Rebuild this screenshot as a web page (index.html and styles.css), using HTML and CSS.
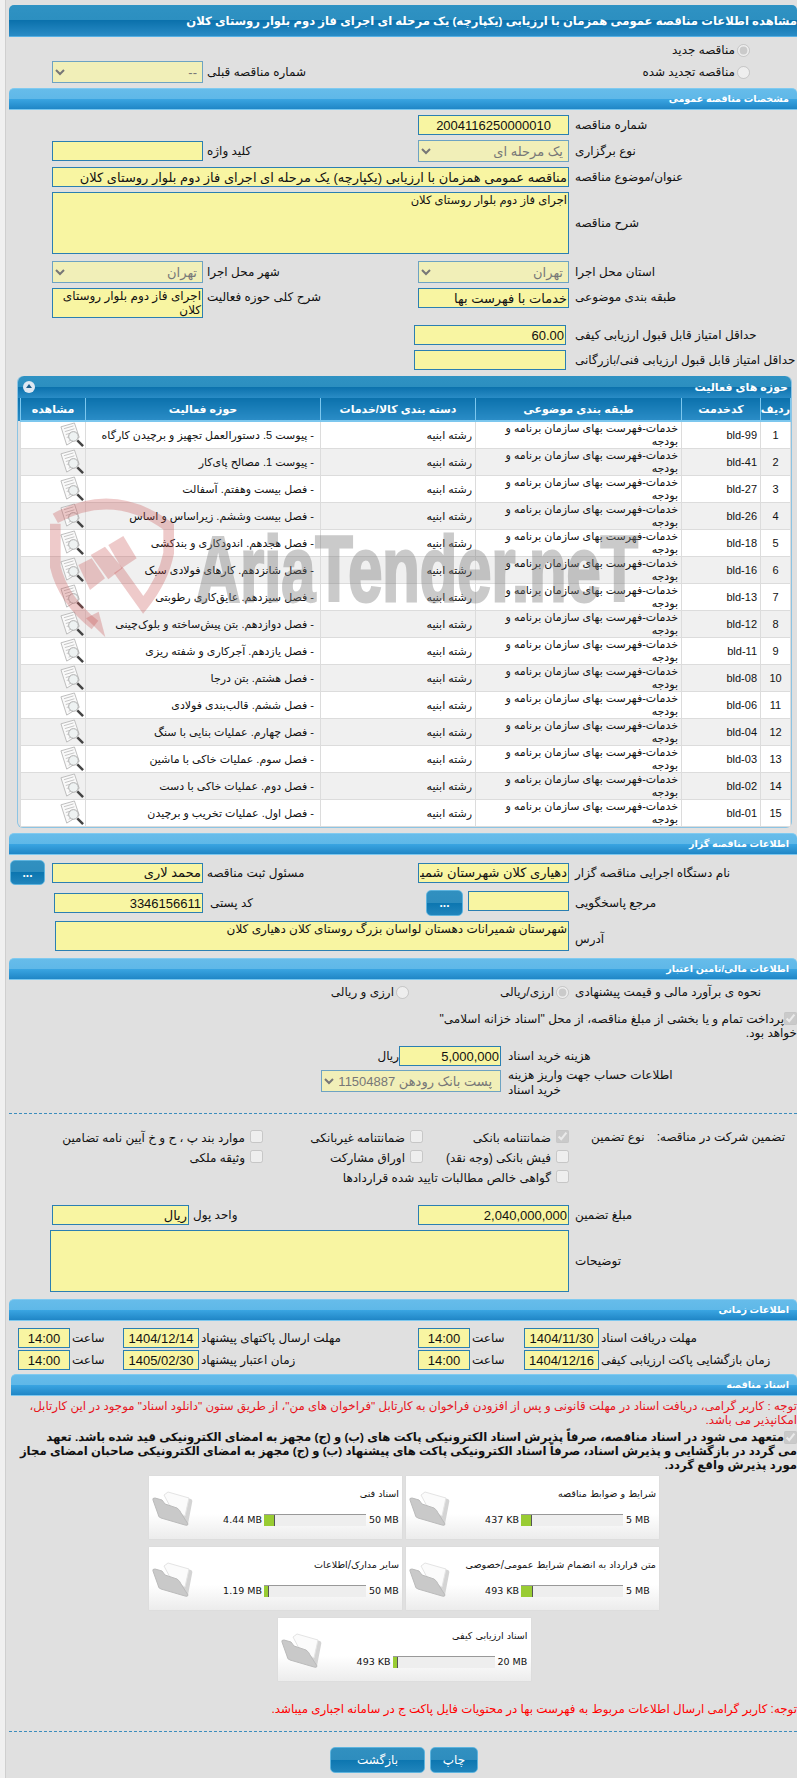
FILE: index.html
```html
<!DOCTYPE html>
<html lang="fa" dir="rtl">
<head>
  <meta charset="UTF-8" />
  <title>مشاهده اطلاعات مناقصه</title>
  <link rel="stylesheet" href="styles.css">
</head>
<body>
  <svg class="defs" width="0" height="0">
    <symbol id="doc-view" viewBox="0 0 26 27">
      <path d="M1 5 L15 1 L20 16 L7 24 Z" fill="#fafafa" stroke="#bbb" />
      <path d="M4 7 L14 4 M5 10 L15 7 M6 13 L11 11.5 M7 16 L9 15.5 M9 20 L11 19" stroke="#c4c4c4" fill="none" />
      <circle cx="14" cy="15" r="5" fill="#eef2f2" stroke="#aaa" />
      <path d="M18 19 L24 25" stroke="#444" stroke-width="2.6" />
    </symbol>
    <symbol id="folder" viewBox="0 0 41 36">
      <path d="M14 3 L39 9 Q41 10 40 13 L36 34 L28 30 Z" fill="#d4d4d4" />
      <path d="M12 5 L16 2 L37 8 L33 26 L20 20 Z" fill="#fbfbfb" stroke="#e4e4e4" />
      <path d="M1 10 Q0 8 3 8 L10 10 L13 14 L25 18 Q28 20 29 23 L36 34 Q36 36 33 35 L9 28 Q6 27 6 24 Z" fill="#c9c9c9" stroke="#bbb" />
    </symbol>
  </svg>

  <div class="page">
    <div class="title-bar">مشاهده اطلاعات مناقصه عمومی همزمان با ارزیابی (یکپارچه) یک مرحله ای اجرای فاز دوم بلوار روستای کلان</div>

    <div class="radio-line"><input type="radio" name="kind" checked disabled><span>مناقصه جدید</span></div>
    <div class="row gap-4">
      <div class="radio-line flush"><input type="radio" name="kind" disabled><span>مناقصه تجدید شده</span></div>
      <div class="cell"></div>
      <label class="lbl2">شماره مناقصه قبلی</label>
      <select class="fld sel" disabled><option>--</option></select>
    </div>

    <div class="section gap-5">مشخصات مناقصه عمومی</div>
    <div class="row gap-5">
      <label class="lbl">شماره مناقصه</label>
      <input class="fld center" type="text" value="2004116250000010" readonly>
    </div>
    <div class="row gap-5">
      <label class="lbl">نوع برگزاری</label>
      <select class="fld sel" disabled><option>یک مرحله ای</option></select>
      <label class="lbl2">کلید واژه</label>
      <input class="fld" type="text" readonly>
    </div>
    <div class="row gap-5">
      <label class="lbl">عنوان/موضوع مناقصه</label>
      <input class="fld span3" type="text" value="مناقصه عمومی همزمان با ارزیابی (یکپارچه) یک مرحله ای اجرای فاز دوم بلوار روستای کلان" readonly>
    </div>
    <div class="row gap-5">
      <label class="lbl">شرح مناقصه</label>
      <textarea class="fld span3 tall" readonly>اجرای فاز دوم بلوار روستای کلان</textarea>
    </div>
    <div class="row gap-7">
      <label class="lbl">استان محل اجرا</label>
      <select class="fld sel" disabled><option>تهران</option></select>
      <label class="lbl2">شهر محل اجرا</label>
      <select class="fld sel" disabled><option>تهران</option></select>
    </div>
    <div class="row gap-5 top">
      <label class="lbl">طبقه بندی موضوعی</label>
      <input class="fld" type="text" value="خدمات با فهرست بها" readonly>
      <label class="lbl2">شرح کلی حوزه فعالیت</label>
      <textarea class="fld short" readonly>اجرای فاز دوم بلوار روستای کلان</textarea>
    </div>
    <div class="row score gap-7">
      <label class="lbl">حداقل امتیاز قابل قبول ارزیابی کیفی</label>
      <input class="fld" type="text" value="60.00" readonly>
    </div>
    <div class="row score gap-5">
      <label class="lbl">حداقل امتیاز قابل قبول ارزیابی فنی/بازرگانی</label>
      <input class="fld" type="text" readonly>
    </div>

    <div class="panel">
      <div class="panel-head">
        <span>حوزه های فعالیت</span>
        <span class="toggle"></span>
      </div>
      <table class="grid">
        <thead>
          <tr><th class="c1">ردیف</th><th class="c2">کدخدمت</th><th class="c3">طبقه بندی موضوعی</th><th class="c4">دسته بندی کالا/خدمات</th><th class="c5">حوزه فعالیت</th><th class="c6">مشاهده</th></tr>
        </thead>
        <tbody>
          <tr><td class="mid">1</td><td class="code">bld-99</td><td>خدمات-فهرست بهای سازمان برنامه و بودجه</td><td>رشته ابنیه</td><td class="area">- پیوست 5. دستورالعمل تجهیز و برچیدن کارگاه</td><td class="view"><svg><use href="#doc-view"/></svg></td></tr>
          <tr><td class="mid">2</td><td class="code">bld-41</td><td>خدمات-فهرست بهای سازمان برنامه و بودجه</td><td>رشته ابنیه</td><td class="area">- پیوست 1. مصالح پای‌کار</td><td class="view"><svg><use href="#doc-view"/></svg></td></tr>
          <tr><td class="mid">3</td><td class="code">bld-27</td><td>خدمات-فهرست بهای سازمان برنامه و بودجه</td><td>رشته ابنیه</td><td class="area">- فصل بیست وهفتم. آسفالت</td><td class="view"><svg><use href="#doc-view"/></svg></td></tr>
          <tr><td class="mid">4</td><td class="code">bld-26</td><td>خدمات-فهرست بهای سازمان برنامه و بودجه</td><td>رشته ابنیه</td><td class="area">- فصل بیست وششم. زیراساس و اساس</td><td class="view"><svg><use href="#doc-view"/></svg></td></tr>
          <tr><td class="mid">5</td><td class="code">bld-18</td><td>خدمات-فهرست بهای سازمان برنامه و بودجه</td><td>رشته ابنیه</td><td class="area">- فصل هجدهم. اندودکاری و بندکشی</td><td class="view"><svg><use href="#doc-view"/></svg></td></tr>
          <tr><td class="mid">6</td><td class="code">bld-16</td><td>خدمات-فهرست بهای سازمان برنامه و بودجه</td><td>رشته ابنیه</td><td class="area">- فصل شانزدهم. کارهای فولادی سبک</td><td class="view"><svg><use href="#doc-view"/></svg></td></tr>
          <tr><td class="mid">7</td><td class="code">bld-13</td><td>خدمات-فهرست بهای سازمان برنامه و بودجه</td><td>رشته ابنیه</td><td class="area">- فصل سیزدهم. عایق‌کاری رطوبتی</td><td class="view"><svg><use href="#doc-view"/></svg></td></tr>
          <tr><td class="mid">8</td><td class="code">bld-12</td><td>خدمات-فهرست بهای سازمان برنامه و بودجه</td><td>رشته ابنیه</td><td class="area">- فصل دوازدهم. بتن پیش‌ساخته و بلوک‌چینی</td><td class="view"><svg><use href="#doc-view"/></svg></td></tr>
          <tr><td class="mid">9</td><td class="code">bld-11</td><td>خدمات-فهرست بهای سازمان برنامه و بودجه</td><td>رشته ابنیه</td><td class="area">- فصل یازدهم. آجرکاری و شفته ریزی</td><td class="view"><svg><use href="#doc-view"/></svg></td></tr>
          <tr><td class="mid">10</td><td class="code">bld-08</td><td>خدمات-فهرست بهای سازمان برنامه و بودجه</td><td>رشته ابنیه</td><td class="area">- فصل هشتم. بتن درجا</td><td class="view"><svg><use href="#doc-view"/></svg></td></tr>
          <tr><td class="mid">11</td><td class="code">bld-06</td><td>خدمات-فهرست بهای سازمان برنامه و بودجه</td><td>رشته ابنیه</td><td class="area">- فصل ششم. قالب‌بندی فولادی</td><td class="view"><svg><use href="#doc-view"/></svg></td></tr>
          <tr><td class="mid">12</td><td class="code">bld-04</td><td>خدمات-فهرست بهای سازمان برنامه و بودجه</td><td>رشته ابنیه</td><td class="area">- فصل چهارم. عملیات بنایی با سنگ</td><td class="view"><svg><use href="#doc-view"/></svg></td></tr>
          <tr><td class="mid">13</td><td class="code">bld-03</td><td>خدمات-فهرست بهای سازمان برنامه و بودجه</td><td>رشته ابنیه</td><td class="area">- فصل سوم. عملیات خاکی با ماشین</td><td class="view"><svg><use href="#doc-view"/></svg></td></tr>
          <tr><td class="mid">14</td><td class="code">bld-02</td><td>خدمات-فهرست بهای سازمان برنامه و بودجه</td><td>رشته ابنیه</td><td class="area">- فصل دوم. عملیات خاکی با دست</td><td class="view"><svg><use href="#doc-view"/></svg></td></tr>
          <tr><td class="mid">15</td><td class="code">bld-01</td><td>خدمات-فهرست بهای سازمان برنامه و بودجه</td><td>رشته ابنیه</td><td class="area">- فصل اول. عملیات تخریب و برچیدن</td><td class="view"><svg><use href="#doc-view"/></svg></td></tr>
        </tbody>
      </table>
    </div>

    <div class="section gap-5">اطلاعات مناقصه گزار</div>
    <div class="row with-btn gap-5">
      <label class="lbl">نام دستگاه اجرایی مناقصه گزار</label>
      <input class="fld" type="text" value="دهیاری کلان شهرستان شمیرانات" readonly>
      <label class="lbl2">مسئول ثبت مناقصه</label>
      <input class="fld" type="text" value="محمد لاری" readonly>
      <button class="btn dots" type="button">...</button>
    </div>
    <div class="row gap-5 h26">
      <label class="lbl">مرجع پاسخگویی</label>
      <div class="ref-wrap">
        <input class="fld ref" type="text" readonly>
        <button class="btn dots2" type="button">...</button>
      </div>
      <label class="lbl2 postal-lbl">کد پستی</label>
      <input class="fld postal" type="text" value="3346156611" readonly>
    </div>
    <div class="row gap-5">
      <label class="lbl addr-lbl">آدرس</label>
      <textarea class="fld span3 addr" readonly>شهرستان شمیرانات دهستان لواسان بزرگ روستای کلان دهیاری کلان</textarea>
    </div>

    <div class="section gap-7">اطلاعات مالی/تامین اعتبار</div>
    <div class="money-type">
      <label class="lbl">نحوه ی برآورد مالی و قیمت پیشنهادی</label>
      <div class="opt w160"><input type="radio" name="cur" checked disabled><span>ارزی/ریالی</span></div>
      <div class="opt"><input type="radio" name="cur" disabled><span>ارزی و ریالی</span></div>
    </div>
    <p class="check-note"><input type="checkbox" checked disabled><span>پرداخت تمام و یا بخشی از مبلغ مناقصه، از محل "اسناد خزانه اسلامی"</span><br>خواهد بود.</p>
    <div class="row doc-cost gap-6">
      <label class="lbl">هزینه خرید اسناد</label>
      <input class="fld" type="text" value="5,000,000" readonly>
      <span class="unit">ریال</span>
    </div>
    <div class="row account gap-2">
      <label class="lbl">اطلاعات حساب جهت واریز هزینه<br>خرید اسناد</label>
      <select class="fld sel" disabled><option>پست بانک رودهن 0211504887</option></select>
    </div>

    <div class="dash gap-15"></div>

    <div class="guarantee">
      <div class="g-title"><span>تضمین شرکت در مناقصه:</span><span>نوع تضمین</span></div>
      <div class="g-opts">
        <div class="opt"><input type="checkbox" checked disabled><span>ضمانتنامه بانکی</span></div>
        <div class="opt"><input type="checkbox" disabled><span>ضمانتنامه غیربانکی</span></div>
        <div class="opt"><input type="checkbox" disabled><span>موارد بند پ ، ح و خ آیین نامه تضامین</span></div>
        <div class="opt"><input type="checkbox" disabled><span>فیش بانکی (وجه نقد)</span></div>
        <div class="opt"><input type="checkbox" disabled><span>اوراق مشارکت</span></div>
        <div class="opt"><input type="checkbox" disabled><span>وثیقه ملکی</span></div>
        <div class="opt wide"><input type="checkbox" disabled><span>گواهی خالص مطالبات تایید شده قراردادها</span></div>
      </div>
    </div>
    <div class="row amount gap-19">
      <label class="lbl">مبلغ تضمین</label>
      <input class="fld" type="text" value="2,040,000,000" readonly>
      <label class="lbl2">واحد پول</label>
      <input class="fld" type="text" value="ریال" readonly>
    </div>
    <div class="row gap-5">
      <label class="lbl">توضیحات</label>
      <textarea class="fld span3 notes" readonly></textarea>
    </div>

    <div class="section gap-7">اطلاعات زمانی</div>
    <div class="times gap-7">
      <label class="lbl">مهلت دریافت اسناد</label>
      <input class="fld" type="text" value="1404/11/30" readonly>
      <label>ساعت</label>
      <input class="fld" type="text" value="14:00" readonly>
      <label>مهلت ارسال پاکتهای پیشنهاد</label>
      <input class="fld" type="text" value="1404/12/14" readonly>
      <label>ساعت</label>
      <input class="fld" type="text" value="14:00" readonly>
    </div>
    <div class="times gap-2">
      <label class="lbl">زمان بازگشایی پاکت ارزیابی کیفی</label>
      <input class="fld" type="text" value="1404/12/16" readonly>
      <label>ساعت</label>
      <input class="fld" type="text" value="14:00" readonly>
      <label>زمان اعتبار پیشنهاد</label>
      <input class="fld" type="text" value="1405/02/30" readonly>
      <label>ساعت</label>
      <input class="fld" type="text" value="14:00" readonly>
    </div>

    <div class="section docs gap-4">اسناد مناقصه</div>
    <p class="red-note">توجه : کاربر گرامی، دریافت اسناد در مهلت قانونی و پس از افزودن فراخوان به کارتابل "فراخوان های من"، از طریق ستون "دانلود اسناد" موجود در این کارتابل،<br>امکانپذیر می باشد.</p>
    <p class="bold-note"><input type="checkbox" checked disabled><span>متعهد می شود در اسناد مناقصه، صرفاً پذیرش اسناد الکترونیکی پاکت های (ب) و (ج) مجهز به امضای الکترونیکی قید شده باشد. تعهد</span><br>می گردد در بازگشایی و پذیرش اسناد، صرفاً اسناد الکترونیکی پاکت های پیشنهاد (ب) و (ج) مجهز به امضای الکترونیکی صاحبان امضای مجاز<br>مورد پذیرش واقع گردد.</p>

    <div class="cards">
      <div class="card">
        <svg class="folder"><use href="#folder"/></svg>
        <div class="card-body">
          <div class="card-title">شرایط و ضوابط مناقصه</div>
          <div class="meter"><span>437 KB</span><div class="bar"><div class="fill" style="width: 11%"></div></div><span class="max">5 MB</span></div>
        </div>
      </div>
      <div class="card">
        <svg class="folder"><use href="#folder"/></svg>
        <div class="card-body">
          <div class="card-title">اسناد فنی</div>
          <div class="meter"><span>4.44 MB</span><div class="bar"><div class="fill" style="width: 11%"></div></div><span class="max">50 MB</span></div>
        </div>
      </div>
      <div class="card">
        <svg class="folder"><use href="#folder"/></svg>
        <div class="card-body">
          <div class="card-title">متن قرارداد به انضمام شرایط عمومی/خصوصی</div>
          <div class="meter"><span>493 KB</span><div class="bar"><div class="fill" style="width: 11.5%"></div></div><span class="max">5 MB</span></div>
        </div>
      </div>
      <div class="card">
        <svg class="folder"><use href="#folder"/></svg>
        <div class="card-body">
          <div class="card-title">سایر مدارک/اطلاعات</div>
          <div class="meter"><span>1.19 MB</span><div class="bar"><div class="fill" style="width: 5%"></div></div><span class="max">50 MB</span></div>
        </div>
      </div>
      <div class="card">
        <svg class="folder"><use href="#folder"/></svg>
        <div class="card-body">
          <div class="card-title">اسناد ارزیابی کیفی</div>
          <div class="meter"><span>493 KB</span><div class="bar"><div class="fill" style="width: 5%"></div></div><span class="max">20 MB</span></div>
        </div>
      </div>
    </div>

    <p class="red-note last">توجه: کاربر گرامی ارسال اطلاعات مربوط به فهرست بها در محتویات فایل پاکت ج در سامانه اجباری میباشد.</p>
    <div class="dash gap-15"></div>
    <div class="actions">
      <button class="btn print" type="button">چاپ</button>
      <button class="btn back" type="button">بازگشت</button>
    </div>
  </div>

  <svg class="watermark" viewBox="40 490 610 160">
    <g transform="translate(40 490) scale(.3333)">
      <g fill="none" stroke="#c85050" stroke-opacity=".3" stroke-width="32">
        <path d="M46 85 Q220 -12 386 110 L386 190 Q370 270 310 345 L235 240" />
        <path d="M46 101 L46 230 Q70 330 165 405" />
      </g>
      <g fill="#c85050" fill-opacity=".3">
        <path d="M138 385 L176 365 L196 442 Z" />
        <path d="M115 225 L155 205 L195 265 L150 300 Z" />
        <path d="M152 195 L195 170 L248 235 L205 268 Z" />
        <path d="M205 165 L250 138 L290 205 L245 235 Z" />
      </g>
    </g>
    <text class="wm-text" x="196" y="601" textLength="442" lengthAdjust="spacingAndGlyphs">AriaTender.neT</text>
  </svg>
</body>
</html>
```

FILE: styles.css
```css
html, body {
  margin: 0;
  padding: 0;
}

body {
  position: relative;
  background: #f0f0f0;
  font-family: "Liberation Sans", "DejaVu Sans", sans-serif;
  font-size: 12px;
  line-height: 14px;
  color: #111;
  overflow: hidden;
}

.defs {
  position: absolute;
}

.page {
  height: 1778px;
  box-sizing: border-box;
  margin-left: 5px;
  padding: 5px 0 0 3px;
  border-left: 1px solid #cfcfcf;
  background: #e0e0e0;
  overflow: hidden;
}

.gap-2 { margin-top: 2px; }
.gap-4 { margin-top: 4px; }
.gap-5 { margin-top: 5px; }
.gap-6 { margin-top: 6px; }
.gap-7 { margin-top: 7px; }
.gap-15 { margin-top: 15px; }
.gap-19 { margin-top: 19px; }

.title-bar {
  height: 32px;
  box-sizing: border-box;
  border-radius: 5px 5px 0 0;
  border-bottom: 1px solid #56b0e4;
  background: linear-gradient(#2f92c3 0, #2c8fc0 48%, #0b71ac 50%, #2a8cc6 100%);
  color: #fff;
  font-size: 11.6px;
  font-weight: bold;
  line-height: 31px;
  white-space: nowrap;
}

.section {
  height: 22px;
  box-sizing: border-box;
  padding-right: 8px;
  border-radius: 5px 5px 0 0;
  border-top: 1px solid #7fcaf0;
  border-bottom: 1px solid #7cc7ee;
  background: linear-gradient(#66bcea 0, #5fb8e8 48%, #3aa5e2 50%, #2086c6 100%);
  color: #fff;
  font-size: 9.6px;
  font-weight: bold;
  line-height: 20px;
}

.section.docs {
  margin-left: 2px;
}

.row {
  display: grid;
  grid-template-columns: 228px 151px 215px 151px;
  align-items: center;
}

.row.top {
  align-items: start;
}

.row.top label {
  margin-top: 2px;
}

.row.score {
  grid-template-columns: 231px 152px;
}

.row.score .lbl {
  padding-left: 9px;
}

.row.with-btn {
  grid-template-columns: 228px 151px 215px 151px 43px;
  height: 25px;
}

.row.doc-cost {
  grid-template-columns: 296px 102px auto;
}

.row.account {
  grid-template-columns: 296px 180px;
  align-items: start;
}

.row.account .sel {
  margin-top: 2px;
  padding-right: 4px;
}

.row.amount {
  grid-template-columns: 228px 151px 229px 137px;
}

.h26 {
  height: 26px;
}

.lbl {
  padding-left: 6px;
  text-align: left;
  white-space: nowrap;
}

.lbl2 {
  padding-left: 4px;
  text-align: left;
  white-space: nowrap;
}

.postal-lbl {
  padding-left: 7px;
}

.addr-lbl {
  align-self: end;
  margin-bottom: 5px;
}

.fld {
  display: block;
  width: 100%;
  height: 20px;
  box-sizing: border-box;
  margin: 0;
  padding: 0 1px;
  border: 1px solid #2b7fb2;
  border-radius: 0;
  background: #f8f5a2;
  font-family: "Liberation Sans", "DejaVu Sans", sans-serif;
  font-size: 13px;
  color: #111;
  outline: none;
  resize: none;
}

.center {
  text-align: center;
}

.sel {
  height: 22px;
  border-color: #6ea3c2;
  background-color: #f1efb8;
  color: #777;
  opacity: 1;
}

.span3 {
  grid-column: span 3;
}

.tall {
  height: 62px;
  font-size: 11.5px;
}

.short {
  height: 30px;
  font-size: 12px;
  line-height: 14px;
}

.addr {
  width: 514px;
  height: 30px;
  font-size: 12px;
}

.notes {
  width: 519px;
  height: 62px;
}

.ref-wrap {
  display: flex;
  gap: 5px;
  align-items: flex-start;
}

.ref {
  width: 101px;
  margin-top: 1px;
}

.postal {
  width: 149px;
  margin-top: 3px;
  align-self: start;
}

.btn {
  padding: 0;
  border: 1px solid #5fb4de;
  border-radius: 5px;
  background: linear-gradient(#3190c0 0, #2e8dbe 48%, #0c76b0 50%, #2185bc 100%);
  color: #fff;
  font-family: "Liberation Sans", "DejaVu Sans", sans-serif;
  font-size: 12px;
}

.dots {
  width: 35px;
  height: 25px;
  margin-right: 7px;
  font-weight: bold;
}

.dots2 {
  width: 37px;
  height: 26px;
  font-weight: bold;
}

.radio-line {
  display: flex;
  align-items: center;
  gap: 2px;
  margin-top: 6px;
  padding-right: 47px;
}

.radio-line.flush {
  margin-top: 0;
  padding-right: 47px;
}

.radio-line input,
.opt input,
.check-note input,
.bold-note input {
  width: 13px;
  height: 13px;
  margin: 0;
}

.panel {
  margin: 6px 5px 0 8px;
  padding: 0 0 0 3px;
  border: 1px solid #8cc4e4;
  border-top: 0;
  border-radius: 6px;
  background: linear-gradient(#0b71ac 0, #2a8cc6 100%) 0 22px / 100% 23px no-repeat;
}

.panel-head {
  display: flex;
  justify-content: space-between;
  align-items: center;
  height: 22px;
  margin-left: -3px;
  padding: 0 3px 0 5px;
  border-radius: 6px 6px 0 0;
  background: linear-gradient(#2f92c3 0, #2c8fc0 48%, #0b71ac 50%, #2a8cc6 100%);
  color: #fff;
  font-size: 11px;
  font-weight: bold;
}

.toggle {
  position: relative;
  width: 12px;
  height: 12px;
  border-radius: 50%;
  background: #dfe8f2;
}

.toggle::after {
  content: "";
  position: absolute;
  left: 3px;
  top: 3px;
  border: 3px solid transparent;
  border-top: 0;
  border-bottom: 4px solid #1c5f8c;
}

.grid {
  width: 770px;
  table-layout: fixed;
  border-collapse: collapse;
}

.grid th {
  height: 23px;
  padding: 0;
  border-left: 1px solid #7cc7ee;
  border-right: 1px solid #7cc7ee;
  border-bottom: 2px solid #7cc7ee;
  box-sizing: border-box;
  background: linear-gradient(#0b71ac 0, #2a8cc6 100%);
  color: #fff;
  font-size: 11px;
}

.c1 { width: 30px; }
.c2 { width: 79px; }
.c3 { width: 206px; }
.c4 { width: 155px; }
.c5 { width: 235px; }
.c6 { width: 65px; }

.grid td {
  height: 27px;
  padding: 0 3px;
  box-sizing: border-box;
  border: 1px solid #dcdcdc;
  background: #fff;
  font-size: 11px;
  line-height: 13px;
}

.grid tbody tr:nth-child(even) td {
  background: #f0f0f0;
}

.grid td.mid {
  text-align: center;
}

.grid td.area {
  padding-right: 6px;
}

.grid td.view {
  padding: 0;
}

.view svg {
  display: block;
  width: 25px;
  height: 26px;
}

.money-type {
  display: grid;
  grid-template-columns: 228px 160px auto;
  align-items: center;
  margin-top: 5px;
  height: 14px;
}

.opt {
  display: flex;
  align-items: center;
  gap: 5px;
  white-space: nowrap;
}

.money-type .opt {
  gap: 2px;
}

.check-note {
  margin: 13px 0 0;
  white-space: nowrap;
}

.check-note input {
  vertical-align: bottom;
  margin-bottom: 1px;
}

.row.doc-cost .unit {
  white-space: nowrap;
}

.row.account .lbl {
  padding-left: 7px;
  line-height: 15px;
}

.row.doc-cost .lbl {
  padding-left: 7px;
}

.dash {
  border-top: 1px dashed #3b8dbd;
}

.guarantee {
  display: grid;
  grid-template-columns: 228px 1fr;
  margin-top: 12px;
}

.g-title {
  display: flex;
  justify-content: space-between;
  padding: 0 12px 0 22px;
  line-height: 14px;
  margin-top: 4px;
}

.g-opts {
  display: grid;
  grid-template-columns: 146px 160px 1fr;
  grid-auto-rows: 20px;
}

.g-opts .wide {
  grid-column: span 3;
}

.g-opts span {
  padding-top: 4px;
}

.times {
  display: grid;
  grid-template-columns: 198px 75px 54px 52px 219px 76px 53px 52px;
  align-items: center;
  height: 20px;
}

.times label {
  padding-left: 2px;
  text-align: left;
  white-space: nowrap;
}

.times .fld {
  text-align: center;
}

.red-note {
  margin: 3px 0 0;
  color: #e8141c;
  font-size: 11.8px;
  white-space: nowrap;
}

.red-note.last {
  margin-top: 21px;
  color: #f00;
  font-size: 11.85px;
}

.bold-note {
  margin: 3px 0 0;
  font-size: 11.7px;
  font-weight: bold;
  white-space: nowrap;
}

.bold-note input {
  vertical-align: middle;
}

.cards {
  display: flex;
  flex-wrap: wrap;
  justify-content: center;
  gap: 8px 4px;
  width: 510px;
  margin: 4px 138px 0 0;
}

.card {
  display: flex;
  direction: ltr;
  width: 253px;
  height: 63px;
  box-sizing: border-box;
  padding: 14px 3px 0;
  background: linear-gradient(#fff 0, #fff 60%, #ececec 100%);
  box-shadow: 0 0 1px #d0d0d0;
  font-family: "DejaVu Sans", sans-serif;
}

.folder {
  flex: none;
  width: 41px;
  height: 36px;
}

.card-body {
  flex: 1;
  margin-top: -3px;
}

.card-title {
  direction: rtl;
  font-size: 9.6px;
  height: 26px;
  line-height: 14px;
  white-space: nowrap;
}

.meter {
  display: flex;
  justify-content: flex-end;
  align-items: center;
  gap: 2px;
  font-size: 9.5px;
}

.max {
  width: 30px;
  padding-left: 1px;
}

.bar {
  width: 102px;
  height: 12px;
  box-sizing: border-box;
  border-top: 1px solid #999;
  background: #eee;
}

.fill {
  height: 11px;
  box-sizing: border-box;
  border-right: 1px solid #555;
  background: #9c3;
}

.actions {
  display: flex;
  justify-content: center;
  gap: 5px;
  margin-top: 15px;
  margin-right: -2px;
}

.print {
  width: 48px;
  height: 26px;
}

.back {
  width: 95px;
  height: 26px;
}

.watermark {
  position: absolute;
  left: 40px;
  top: 490px;
  width: 610px;
  height: 160px;
  direction: ltr;
  pointer-events: none;
}

.wm-text {
  font-family: "Liberation Sans", sans-serif;
  font-size: 92px;
  font-weight: bold;
  fill: #777;
  stroke: #777;
  stroke-width: 3px;
  opacity: .38;
  direction: ltr;
  unicode-bidi: bidi-override;
}
```
